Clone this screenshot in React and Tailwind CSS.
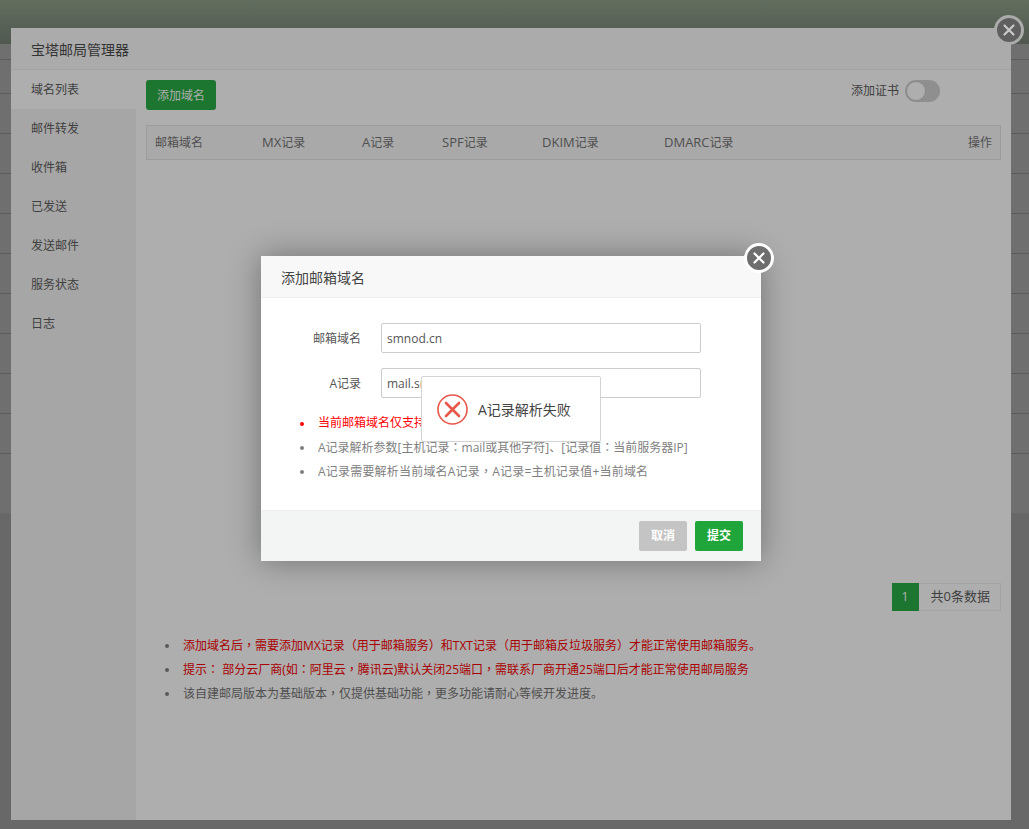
import React from "react";

const menu = ["域名列表", "邮件转发", "收件箱", "已发送", "发送邮件", "服务状态", "日志"];
const cols = [
  ["邮箱域名", "", "w-[107px]"],
  ["记录", "MX", "w-[100px]"],
  ["记录", "A", "w-[80px]"],
  ["记录", "SPF", "w-[100px]"],
  ["记录", "DKIM", "w-[122px]"],
  ["记录", "DMARC", "flex-1"],
];
const bgLines = [59, 93, 133, 173, 213, 253, 293, 333, 373, 413, 453];

function CloseBtn({ className }) {
  return (
    <div className={`absolute flex items-center justify-center rounded-full border-[3px] ${className}`}>
      <svg width="14" height="14" viewBox="0 0 14 14" fill="none" stroke="currentColor" strokeWidth="2.2" strokeLinecap="round">
        <path d="M2.5 2.5l9 9M11.5 2.5l-9 9" />
      </svg>
    </div>
  );
}

function Dot({ color = "bg-[#5a5a5a]" }) {
  return <span className={`mr-[14px] mt-[8px] h-[4px] w-[4px] shrink-0 rounded-full ${color}`} />;
}

// the reference centres this punctuation in its cell
function Punct({ text }) {
  return text.split(/([，：（）])/).map((part, i) => {
    if (part === "，" || part === "：")
      return <span key={i} className="font-['Noto_Sans_CJK_TC',sans-serif]">{part}</span>;
    if (part === "（" || part === "）")
      return <span key={i} className="font-['Noto_Sans_CJK_KR',sans-serif]">{part}</span>;
    return part;
  });
}

export default function App() {
  return (
    <div className="relative h-[829px] w-[1029px] overflow-hidden bg-[#6f6f6f] font-['Open_Sans','Noto_Sans_CJK_SC',sans-serif] text-[12px]">
      {/* page behind the dialogs */}
      <div className="h-[44px] bg-[linear-gradient(#626e5e,#505850)]" />
      {bgLines.map((y) => (
        <div key={y} className="absolute left-0 right-0 h-px bg-[#5c5c5c]" style={{ top: y }} />
      ))}
      <div className="absolute bottom-0 left-0 right-0 top-[513px] bg-[#686868]" />

      {/* mail manager dialog */}
      <div className="absolute left-[11px] top-[28px] flex h-[792px] w-[1000px] flex-col bg-[#aeaeae]">
        <div className="flex h-[42px] shrink-0 items-center border-b border-[#a3a3a3] bg-[#ababab] pl-5 pt-[2px] text-[14px] text-[#333333]">
          宝塔邮局管理器
        </div>
        <div className="flex min-h-0 flex-1">
          <div className="w-[125px] shrink-0 bg-[#a6a6a6]">
            {menu.map((m, i) => (
              <div key={m} className={`flex h-[39px] items-center pl-5 text-[#3f3f3f] ${i === 0 ? "bg-[#aeaeae]" : ""}`}>
                {m}
              </div>
            ))}
          </div>
          <div className="flex min-w-0 flex-1 flex-col px-[10px] pt-[10px]">
            <div className="flex items-start justify-between">
              <div className="flex h-[30px] w-[70px] items-center justify-center rounded-[3px] bg-[#1c762f] pt-px text-[#aeaeae]">添加域名</div>
              <div className="mr-[61px] flex items-center gap-[6px] text-[#3f3f3f]">
                <span>添加证书</span>
                <div className="flex h-[22px] w-[35px] items-center rounded-full bg-[#8f8f8f] pl-[1px]">
                  <div className="h-[20px] w-[20px] rounded-full border border-[#8a8a8a] bg-[#aeaeae]" />
                </div>
              </div>
            </div>
            <div className="mt-[15px] flex h-[35px] items-center border border-[#9c9c9c] bg-[#a9a9a9] px-2 text-[#4f4f4f]">
              {cols.map(([c, latin, w]) => (
                <div key={latin + c} className={w}>
                  <span className="text-[13px]">{latin}</span>{c}
                </div>
              ))}
              <div>操作</div>
            </div>
            <div className="mt-[423px] flex justify-end">
              <div className="flex h-[28px] items-center border border-[#a3a3a3] text-[13px]">
                <div className="-my-px -ml-px flex h-[28px] w-[27px] items-center justify-center bg-[#1c762f] text-[#aeaeae]">1</div>
                <div className="pl-[12px] pr-[10px] text-[#3f3f3f]">共0条数据</div>
              </div>
            </div>
            <ul className="mt-[25px] flex flex-col pl-[19px] text-[#4f4f4f]">
              <li className="flex h-[24px] items-start"><Dot /><span className="text-[#a80000]"><Punct text="添加域名后，需要添加MX记录（用于邮箱服务）和TXT记录（用于邮箱反垃圾服务）才能正常使用邮箱服务。" /></span></li>
              <li className="flex h-[24px] items-start"><Dot /><span className="text-[#a80000]"><Punct text="提示： 部分云厂商(如：阿里云，腾讯云)默认关闭25端口，需联系厂商开通25端口后才能正常使用邮局服务" /></span></li>
              <li className="flex h-[24px] items-start"><Dot /><span><Punct text="该自建邮局版本为基础版本，仅提供基础功能，更多功能请耐心等候开发进度。" /></span></li>
            </ul>
          </div>
        </div>
      </div>
      <CloseBtn className="left-[994px] top-[15px] h-[30px] w-[30px] border-[#ababab] bg-[#5f5f5f] text-[#c9c9c9]" />

      {/* add domain dialog */}
      <div className="absolute left-[261px] top-[256px] flex h-[305px] w-[500px] flex-col bg-white shadow-[0_0_30px_rgba(0,0,0,0.35)]">
        <div className="flex h-[42px] shrink-0 items-center border-b border-[#eeeeee] bg-[#f8f8f8] pl-5 pt-[2px] text-[14px] text-[#444444]">添加邮箱域名</div>
        <div className="flex-1 pt-[25px]">
          <div className="flex items-center">
            <label className="w-[100px] pt-px text-right text-[#555555]">邮箱域名</label>
            <div className="ml-5 flex h-[30px] w-[320px] items-center rounded-[2px] border border-[#cccccc] pl-[5px] pt-px text-[#555555]">smnod.cn</div>
          </div>
          <div className="mt-[15px] flex items-center">
            <label className="w-[100px] pt-px text-right text-[#555555]">A记录</label>
            <div className="ml-5 flex h-[30px] w-[320px] items-center rounded-[2px] border border-[#cccccc] pl-[5px] pt-px text-[#555555]">mail.smnod.cn</div>
          </div>
          <ul className="mt-[16px] flex flex-col pl-[39px] text-[#808080]">
            <li className="flex h-[24px] items-start"><Dot color="bg-[#ff0000]" /><span className="text-[#ff0000]">当前邮箱域名仅支持一级域名或二级域名</span></li>
            <li className="flex h-[24px] items-start"><Dot color="bg-[#808080]" /><span><Punct text="A记录解析参数[主机记录：mail或其他字符]、[记录值：当前服务器IP]" /></span></li>
            <li className="flex h-[24px] items-start"><Dot color="bg-[#808080]" /><span className="tracking-[0.2px]"><Punct text="A记录需要解析当前域名A记录，A记录=主机记录值+当前域名" /></span></li>
          </ul>
        </div>
        <div className="flex h-[51px] shrink-0 items-center justify-end gap-2 border-t border-[#eeeeee] bg-[#f3f5f5] pr-[18px] font-bold text-white">
          <div className="flex h-[30px] w-[48px] items-center justify-center rounded-[2px] bg-[#c4c4c4]">取消</div>
          <div className="flex h-[30px] w-[48px] items-center justify-center rounded-[2px] bg-[#20a53a]">提交</div>
        </div>
      </div>
      <CloseBtn className="left-[744px] top-[243px] h-[30px] w-[30px] border-white bg-[#6e6e6e] text-white" />

      {/* error toast */}
      <div className="absolute left-[421px] top-[376px] flex h-[66px] w-[180px] items-center gap-[10px] rounded-[2px] border border-[#d3d3d3] bg-white pl-[15px] text-[14px] text-[#444444]">
        <svg width="31" height="31" viewBox="0 0 31 31" fill="none" stroke="#e8574a">
          <circle cx="15.5" cy="15.5" r="14.5" strokeWidth="1.6" />
          <path d="M9 9l13 13M22 9l-13 13" strokeWidth="2.6" strokeLinecap="round" />
        </svg>
        <span>A记录解析失败</span>
      </div>
    </div>
  );
}
